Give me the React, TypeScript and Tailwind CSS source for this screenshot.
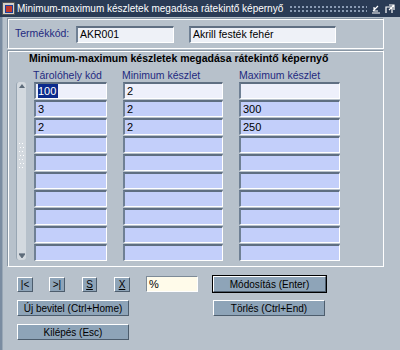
import React from 'react';

const rows = [
  ['100', '2', ''],
  ['3', '2', '300'],
  ['2', '2', '250'],
  ['', '', ''],
  ['', '', ''],
  ['', '', ''],
  ['', '', ''],
  ['', '', ''],
  ['', '', ''],
  ['', '', ''],
];

const Cell: React.FC<{ value: string; width: string; current: boolean; selected?: boolean }> = ({ value, width, current, selected }) => (
  <div
    className={`${width} h-[17px] flex items-center pl-[2px] border-t-2 border-l-2 border-t-[#5f6f82] border-l-[#6f8094] border-b border-r border-b-white border-r-white text-black ${current ? 'bg-[#eef0fb]' : 'bg-[#c3cffa]'}`}
  >
    {selected ? <span className="bg-[#0b2a8c] text-white leading-[14px] pr-[2px]">{value}</span> : value}
  </div>
);

const Btn: React.FC<{ label: string; className?: string; underline?: boolean; isDefault?: boolean }> = ({ label, className = '', underline, isDefault }) => (
  <div
    className={`flex items-center justify-center whitespace-nowrap bg-[#8ea4b8] text-black border border-t-white border-l-white border-b-[#4d5d6d] border-r-[#4d5d6d] ${isDefault ? 'outline outline-1 outline-black' : ''} ${className}`}
  >
    <span className={underline ? 'underline' : ''}>{label}</span>
  </div>
);

export default function App() {
  return (
    <div className="w-[400px] h-[350px] overflow-hidden bg-[#b7c1cb] text-[10.5px] flex flex-col" style={{ fontFamily: '"Liberation Sans", Arial, sans-serif' }}>
      {/* title bar */}
      <div className="h-[17px] bg-[#2a3b55] flex items-center text-white shrink-0">
        <div className="w-[13px] h-[13px] ml-[2px] mr-[2px] bg-[#d4d0c8] border border-[#555] flex items-center justify-center">
          <div className="w-[8px] h-[8px] bg-[#c0392b] border border-[#1d3f9e]" />
        </div>
        <span className="text-[10px] whitespace-nowrap">Minimum-maximum készletek megadása rátekintő képernyő</span>
        <div className="ml-[6px] flex-1 h-[8px] bg-[radial-gradient(circle,#8a9bb3_0.8px,transparent_1px)] bg-[length:4px_4px]" />
        <svg width="10" height="10" viewBox="0 0 10 10" className="ml-[4px]">
          <path d="M1 9h8M2 7l5-5M3 3v4h4" stroke="#fff" strokeWidth="1.2" fill="none" />
        </svg>
        <svg width="10" height="10" viewBox="0 0 10 10" className="ml-[4px] mr-[5px]">
          <path d="M1 9V3h6v6M4 1h5v5M4 6l5-5" stroke="#fff" strokeWidth="1.2" fill="none" />
        </svg>
      </div>

      <div className="flex-1 flex">
        <div className="w-[3px] bg-[#7a8ca1] border-r border-[#9aa8b6]" />
        <div className="flex-1 pl-[4px] pt-[1px]">
          {/* product panel */}
          <div className="w-[377px] h-[31px] border border-t-[#8795a3] border-l-[#8795a3] border-b-white border-r-white shadow-[inset_1px_1px_0_#ffffff] flex items-center pt-[1px]">
            <span className="ml-[7px] w-[61px] text-[#1f2a80]">Termékkód:</span>
            <div className="w-[98px] h-[17px] bg-[#eef1f7] border-t-2 border-l-2 border-t-[#5f6f82] border-l-[#6f8094] border-b border-r border-b-white border-r-white flex items-center pl-[2px]">AKR001</div>
            <div className="ml-[15px] w-[147px] h-[17px] bg-[#eef1f7] border-t-2 border-l-2 border-t-[#5f6f82] border-l-[#6f8094] border-b border-r border-b-white border-r-white flex items-center pl-[2px]">Akrill festék fehér</div>
          </div>

          {/* grid panel */}
          <div className="mt-[1px] w-[377px] h-[217px] border border-t-[#8795a3] border-l-[#8795a3] border-b-white border-r-white shadow-[inset_1px_1px_0_#ffffff] flex flex-col">
            <div className="ml-[21px] mt-[1px] h-[13px] font-bold text-[10.5px] leading-[13px] text-black whitespace-nowrap">
              Minimum-maximum készletek megadása rátekintő képernyő
            </div>
            <div className="flex mt-[5px] h-[11px] leading-[11px] text-[#1f2a80] text-[10.5px]">
              <span className="ml-[25px] w-[89px]">Tárolóhely kód</span>
              <span className="w-[117px]">Minimum készlet</span>
              <span>Maximum készlet</span>
            </div>
            <div className="flex mt-[1px]">
              {/* scrollbar */}
              <div className="ml-[8px] w-[10px] h-[178px] bg-[#d3d9df] border-l border-[#98a6b3] rounded-[3px] flex flex-col items-center justify-between py-[2px]">
                <svg width="6" height="4" viewBox="0 0 6 4"><path d="M0 4L3 0L6 4Z" fill="#5d6b79" /></svg>
                <div className="flex flex-col gap-[3px] -mt-[30px]">
                  {Array.from({ length: 7 }).map((_, i) => (
                    <div key={i} className={`flex gap-[2px] ${i % 2 ? 'ml-[1px]' : ''}`}>
                      <div className="w-[1px] h-[1px] bg-white" />
                      <div className="w-[1px] h-[1px] bg-white" />
                    </div>
                  ))}
                </div>
                <svg width="6" height="5" viewBox="0 0 6 5"><path d="M0 0h6M0 1L3 5L6 1Z" stroke="#5d6b79" strokeWidth="0.8" fill="#5d6b79" /></svg>
              </div>
              <div className="ml-[8px] flex flex-col gap-[1px] text-[11px]">
                {rows.map((r, i) => (
                  <div key={i} className="flex">
                    <Cell value={r[0]} width="w-[73px]" current={i === 0} selected={i === 0} />
                    <div className="ml-[16px]"><Cell value={r[1]} width="w-[100px]" current={i === 0} /></div>
                    <div className="ml-[16px]"><Cell value={r[2]} width="w-[101px]" current={i === 0} /></div>
                  </div>
                ))}
              </div>
            </div>
          </div>

          {/* buttons */}
          <div className="flex items-center mt-[8px] h-[18px] text-[10px]">
            <Btn label="|<" className="ml-[10px] w-[16px] h-[15px]" />
            <Btn label=">|" className="ml-[16px] w-[16px] h-[15px]" />
            <Btn label="S" underline className="ml-[17px] w-[15px] h-[15px]" />
            <Btn label="X" underline className="ml-[17px] w-[16px] h-[15px]" />
            <div className="ml-[16px] w-[52px] h-[16px] bg-[#fffbea] border-t border-l border-[#7d8a97] border-b border-r border-b-white border-r-white flex items-center pl-[2px] text-[11px]">%</div>
            <Btn label="Módosítás (Enter)" isDefault className="ml-[15px] w-[113px] h-[16px]" />
          </div>
          <div className="flex items-center mt-[7px] text-[10px]">
            <Btn label="Új bevitel (Ctrl+Home)" className="ml-[10px] w-[112px] h-[16px]" />
            <Btn label="Törlés (Ctrl+End)" className="ml-[84px] w-[112px] h-[16px]" />
          </div>
          <div className="flex items-center mt-[8px] text-[10px]">
            <Btn label="Kilépés (Esc)" className="ml-[10px] w-[112px] h-[16px]" />
          </div>
        </div>
      </div>
    </div>
  );
}
